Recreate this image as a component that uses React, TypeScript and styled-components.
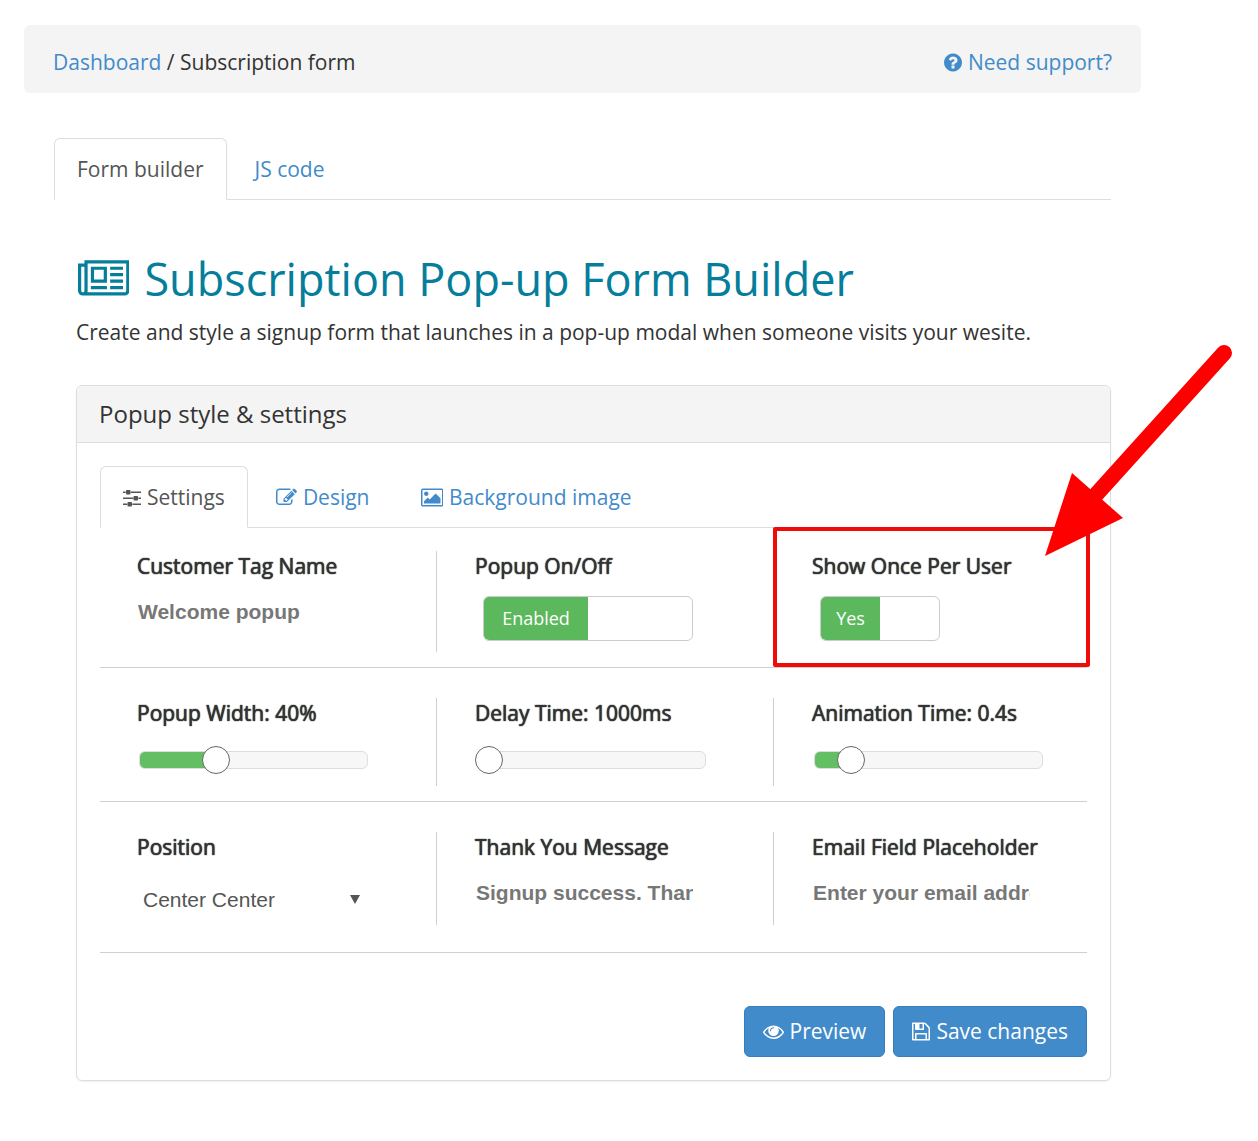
import React, { useState } from "react";
import styled, { createGlobalStyle, css } from "styled-components";

const colors = {
  link: "#428bca",
  text: "#333333",
  muted: "#555555",
  teal: "#057e9b",
  border: "#dddddd",
  rule: "#cfcfcf",
  green: "#5cb85c",
  grey: "#f4f4f4",
};

const sans = `"Open Sans", "Noto Sans", sans-serif`;
const arial = `"Liberation Sans", Arial, sans-serif`;

const GlobalStyle = createGlobalStyle`
  *, *::before, *::after { box-sizing: border-box; }
  body {
    margin: 0;
    background: #fff;
    color: ${colors.text};
    font: 21px/30px ${sans};
  }
  a { color: ${colors.link}; text-decoration: none; }
`;

/* ---------- icons ---------- */

const icons = {
  newspaper: {
    box: "0 0 2048 1792",
    d: "M1024 512h-384v384h384v-384zm128 640v128h-640v-128h640zm0-768v640h-640v-640h640zm640 768v128h-512v-128h512zm0-256v128h-512v-128h512zm0-256v128h-512v-128h512zm0-256v128h-512v-128h512zm-1536 960v-960h-128v960q0 26 19 45t45 19 45-19 19-45zm1664 0v-1088h-1536v1088q0 33-11 64h1483q26 0 45-19t19-45zm128-1216v1216q0 80-56 136t-136 56h-1664q-80 0-136-56t-56-136v-1088h256v-128h1792z",
  },
  question: {
    box: "128 0 1536 1792",
    d: "M1024 1376v-192q0-14-9-23t-23-9h-192q-14 0-23 9t-9 23v192q0 14 9 23t23 9h192q14 0 23-9t9-23zm256-672q0-88-55.5-163t-138.5-116-170-41q-243 0-371 213-15 24 8 42l132 100q7 6 19 6 16 0 25-12 53-68 86-92 34-24 86-24 48 0 85.5 26t37.5 59q0 38-20 61t-68 45q-63 28-115.5 86.5t-52.5 125.5v36q0 14 9 23t23 9h192q14 0 23-9t9-23q0-19 21.5-49.5t54.5-49.5q32-18 49-28.5t46-35 44.5-48 28-60.5 12.5-81zm384 192q0 209-103 385.5t-279.5 279.5-385.5 103-385.5-103-279.5-279.5-103-385.5 103-385.5 279.5-279.5 385.5-103 385.5 103 279.5 279.5 103 385.5z",
  },
  sliders: {
    box: "128 0 1536 1792",
    d: "M480 1408v128h-352v-128h352zm352-128q26 0 45 19t19 45v256q0 26-19 45t-45 19h-256q-26 0-45-19t-19-45v-256q0-26 19-45t45-19h256zm160-384v128h-864v-128h864zm-640-512v128h-224v-128h224zm1312 1024v128h-736v-128h736zm-960-1152q26 0 45 19t19 45v256q0 26-19 45t-45 19h-256q-26 0-45-19t-19-45v-256q0-26 19-45t45-19h256zm640 512q26 0 45 19t19 45v256q0 26-19 45t-45 19h-256q-26 0-45-19t-19-45v-256q0-26 19-45t45-19h256zm320 128v128h-224v-128h224zm0-512v128h-864v-128h864z",
  },
  pencil: {
    box: "0 0 1792 1792",
    d: "M888 1184l116-116-152-152-116 116v56h96v96h56zm440-720q-16-16-33 1l-350 350q-17 17-1 33t33-1l350-350q17-17 1-33zm80 594v190q0 119-84.5 203.5t-203.5 84.5h-832q-119 0-203.5-84.5t-84.5-203.5v-832q0-119 84.5-203.5t203.5-84.5h832q63 0 117 25 15 7 18 23 3 17-9 29l-49 49q-14 14-32 8-23-6-45-6h-832q-66 0-113 47t-47 113v832q0 66 47 113t113 47h832q66 0 113-47t47-113v-126q0-13 9-22l64-64q15-15 35-7t20 29zm-96-738l288 288-672 672h-288v-288zm444 132l-92 92-288-288 92-92q28-28 68-28t68 28l152 152q28 28 28 68t-28 68z",
  },
  picture: {
    box: "-64 0 1920 1792",
    d: "M576 576q0 80-56 136t-136 56-136-56-56-136 56-136 136-56 136 56 56 136zm1024 384v448h-1408v-192l320-320 160 160 512-512zm96-704h-1600q-13 0-22.5 9.5t-9.5 22.5v1216q0 13 9.5 22.5t22.5 9.5h1600q13 0 22.5-9.5t9.5-22.5v-1216q0-13-9.5-22.5t-22.5-9.5zm160 32v1216q0 66-47 113t-113 47h-1600q-66 0-113-47t-47-113v-1216q0-66 47-113t113-47h1600q66 0 113 47t47 113z",
  },
  eye: {
    box: "0 0 1792 1792",
    d: "M1664 960q-152-236-381-353 61 104 61 225 0 185-131.5 316.5t-316.5 131.5-316.5-131.5-131.5-316.5q0-121 61-225-229 117-381 353 133 205 333.5 326.5t434.5 121.5 434.5-121.5 333.5-326.5zm-720-384q0-20-14-34t-34-14q-125 0-214.5 89.5t-89.5 214.5q0 20 14 34t34 14 34-14 14-34q0-86 61-147t147-61q20 0 34-14t14-34zm848 384q0 34-20 69-140 230-376.5 368.5t-499.5 138.5-499.5-139-376.5-368q-20-35-20-69t20-69q140-229 376.5-368t499.5-139 499.5 139 376.5 368q20 35 20 69z",
  },
  floppy: {
    box: "128 0 1536 1792",
    d: "M512 1536h768v-384h-768v384zm896 0h128v-896q0-14-10-38.5t-20-34.5l-281-281q-10-10-34-20t-39-10v416q0 40-28 68t-68 28h-576q-40 0-68-28t-28-68v-416h-128v1280h128v-416q0-40 28-68t68-28h832q40 0 68 28t28 68v416zm-384-928v-320q0-13-9.5-22.5t-22.5-9.5h-192q-13 0-22.5 9.5t-9.5 22.5v320q0 13 9.5 22.5t22.5 9.5h192q13 0 22.5-9.5t9.5-22.5zm640 32v928q0 40-28 68t-68 28h-1344q-40 0-68-28t-28-68v-1344q0-40 28-68t68-28h928q40 0 88 20t76 48l280 280q28 28 48 76t20 88z",
  },
};

const IconSvg = styled.svg<{ $size: number }>`
  display: block;
  flex: none;
  height: ${(p) => p.$size}px;
  width: auto;
  fill: currentColor;
`;

function Icon({ name, size = 21 }: { name: keyof typeof icons; size?: number }) {
  return (
    <IconSvg $size={size} viewBox={icons[name].box} aria-hidden="true">
      <path d={icons[name].d} />
    </IconSvg>
  );
}

/* ---------- page ---------- */

const Page = styled.div`
  padding: 25px 117px 60px 24px;
`;

const TopBar = styled.header`
  display: flex;
  justify-content: space-between;
  align-items: center;
  padding: 22px 29px 16px;
  border-radius: 6px;
  background: ${colors.grey};
`;

const SupportLink = styled.a`
  display: flex;
  align-items: center;
  gap: 6px;
`;

const Main = styled.main`
  padding: 45px 30px 0;
`;

const TabList = styled.nav`
  display: flex;
  gap: 5px;
  border-bottom: 1px solid ${colors.border};
`;

const Tab = styled.a<{ $active?: boolean }>`
  display: flex;
  align-items: center;
  gap: 6px;
  margin-bottom: -1px;
  padding: 15px 22px;
  border: 1px solid transparent;
  border-radius: 6px 6px 0 0;
  ${(p) =>
    p.$active &&
    css`
      color: ${colors.muted};
      background: #fff;
      border-color: ${colors.border} ${colors.border} #fff;
    `}
`;

const Content = styled.div`
  padding: 47px 0 0 22px;
`;

const Title = styled.h1`
  display: flex;
  align-items: center;
  gap: 15px;
  margin: 0;
  padding-left: 2px;
  color: ${colors.teal};
  font-size: 45px;
  line-height: 64px;
  font-weight: 400;
`;

const Lead = styled.p`
  margin: 6px 0 38px;
`;

const Panel = styled.section`
  border: 1px solid ${colors.border};
  border-radius: 6px;
  box-shadow: 0 1px 2px rgba(0, 0, 0, 0.06);
`;

const PanelTitle = styled.h2`
  margin: 0;
  padding: 13px 22px;
  border-bottom: 1px solid ${colors.border};
  border-radius: 5px 5px 0 0;
  background: ${colors.grey};
  font-size: 24px;
  line-height: 30px;
  font-weight: 400;
`;

const PanelBody = styled.form`
  padding: 23px;
`;

const Row = styled.div<{ $top: number; $bottom: number }>`
  display: grid;
  grid-template-columns: 14fr 14fr 13fr;
  padding: ${(p) => p.$top}px 0 ${(p) => p.$bottom}px;
  border-bottom: 1px solid ${colors.rule};
`;

const Cell = styled.div<{ $height: number }>`
  position: relative;
  min-width: 0;
  min-height: ${(p) => p.$height}px;
  padding-left: 38px;
  &:first-child {
    padding-left: 37px;
  }
  &:not(:last-child) {
    border-right: 1px solid ${colors.rule};
  }
`;

const Label = styled.label`
  display: block;
  text-shadow: 0 0 1px ${colors.text}, 0 0 1px ${colors.text};
  white-space: nowrap;
`;

const TextInput = styled.input`
  display: block;
  width: 218px;
  height: 30px;
  margin-top: 16px;
  padding: 0 0 0 1px;
  border: 0;
  outline: 0;
  background: none;
  color: #777;
  font: bold 21px/30px ${arial};
`;

const SelectWrap = styled.div`
  position: relative;
  width: 227px;
  margin-top: 18px;
  &::after {
    content: "";
    position: absolute;
    right: 4px;
    top: 15px;
    border: 5px solid transparent;
    border-top: 9px solid ${colors.muted};
    border-bottom: 0;
    pointer-events: none;
  }
`;

const Select = styled.select`
  appearance: none;
  display: block;
  width: 100%;
  height: 40px;
  padding: 0 6px;
  border: 0;
  background: none;
  color: ${colors.muted};
  font: 21px/30px ${arial};
`;

const HiddenCheck = styled.input`
  position: absolute;
  opacity: 0;
  width: 1px;
  height: 1px;
`;

const Toggle = styled.label<{ $width: number }>`
  display: grid;
  grid-template-columns: 1fr 1fr;
  width: ${(p) => p.$width}px;
  height: 45px;
  margin: 15px 0 0 8px;
  overflow: hidden;
  border: 1px solid #ccc;
  border-radius: 6px;
  background: #fff;
  cursor: pointer;
`;

const ToggleFace = styled.span<{ $on: boolean }>`
  grid-column: ${(p) => (p.$on ? 1 : 2)};
  background: ${(p) => (p.$on ? colors.green : "#eeeeee")};
  color: ${(p) => (p.$on ? "#fff" : colors.text)};
  font-size: 18px;
  line-height: 43px;
  text-align: center;
`;

const Range = styled.input`
  appearance: none;
  display: block;
  width: 229px;
  height: 18px;
  margin: 23px 0 0 2px;
  border: 1px solid ${colors.border};
  border-radius: 6px;
  outline: 0;
  background: linear-gradient(#64be64, #64be64) no-repeat #f7f7f7;
  &::-webkit-slider-runnable-track {
    height: 28px;
    margin: 0 -3px;
  }
  &::-webkit-slider-thumb {
    appearance: none;
    width: 28px;
    height: 28px;
    border: 1px solid #666;
    border-radius: 50%;
    background: #fff;
  }
`;

const Highlight = styled.div`
  position: absolute;
  inset: -24px -3px -15px -1px;
  border: 4px solid #f00a0a;
  border-radius: 2px;
  pointer-events: none;
`;

const Arrow = styled.svg`
  position: absolute;
  right: -146px;
  top: -207px;
  width: 188px;
  height: 213px;
  pointer-events: none;
`;

const Actions = styled.div`
  display: flex;
  justify-content: flex-end;
  gap: 8px;
  padding-top: 53px;
`;

const Button = styled.button`
  display: flex;
  align-items: center;
  gap: 6px;
  padding: 10px 18px;
  border: 1px solid #357ebd;
  border-radius: 6px;
  background: ${colors.link};
  color: #fff;
  font: 21px/29px ${sans};
  cursor: pointer;
`;

/* ---------- fields ---------- */

function ToggleField(props: { id: string; label: string; on: string; off: string; width: number }) {
  const [checked, setChecked] = useState(true);
  return (
    <>
      <Label htmlFor={props.id}>{props.label}</Label>
      <Toggle $width={props.width}>
        <HiddenCheck
          id={props.id}
          type="checkbox"
          checked={checked}
          onChange={(e) => setChecked(e.target.checked)}
        />
        <ToggleFace $on={checked}>{checked ? props.on : props.off}</ToggleFace>
      </Toggle>
    </>
  );
}

function RangeField(props: {
  id: string;
  label: string;
  unit: string;
  min: number;
  max: number;
  step: number;
  initial: number;
}) {
  const [value, setValue] = useState(props.initial);
  const filled = ((value - props.min) / (props.max - props.min)) * 88 + 6;
  return (
    <>
      <Label htmlFor={props.id}>
        {props.label}: {value}
        {props.unit}
      </Label>
      <Range
        id={props.id}
        type="range"
        min={props.min}
        max={props.max}
        step={props.step}
        value={value}
        onChange={(e) => setValue(Number(e.target.value))}
        style={{ backgroundSize: `${filled}% 100%` }}
      />
    </>
  );
}

export default function App() {
  return (
    <>
      <GlobalStyle />
      <Page>
        <TopBar>
          <div>
            <a href="#dashboard">Dashboard</a> / Subscription form
          </div>
          <SupportLink href="#support">
            <Icon name="question" />
            Need support?
          </SupportLink>
        </TopBar>
        <Main>
          <TabList>
            <Tab href="#builder" $active>
              Form builder
            </Tab>
            <Tab href="#code">JS code</Tab>
          </TabList>
          <Content>
            <Title>
              <Icon name="newspaper" size={45} />
              Subscription Pop-up Form Builder
            </Title>
            <Lead>
              Create and style a signup form that launches in a pop-up modal when someone visits your wesite.
            </Lead>
            <Panel>
              <PanelTitle>Popup style &amp; settings</PanelTitle>
              <PanelBody onSubmit={(e) => e.preventDefault()}>
                <TabList>
                  <Tab href="#settings" $active>
                    <Icon name="sliders" />
                    Settings
                  </Tab>
                  <Tab href="#design">
                    <Icon name="pencil" />
                    Design
                  </Tab>
                  <Tab href="#background">
                    <Icon name="picture" />
                    Background image
                  </Tab>
                </TabList>
                <Row $top={23} $bottom={15}>
                  <Cell $height={101}>
                    <Label htmlFor="tag">Customer Tag Name</Label>
                    <TextInput id="tag" defaultValue="Welcome popup" />
                  </Cell>
                  <Cell $height={101}>
                    <ToggleField id="enabled" label="Popup On/Off" on="Enabled" off="Disabled" width={210} />
                  </Cell>
                  <Cell $height={101}>
                    <ToggleField id="once" label="Show Once Per User" on="Yes" off="No" width={120} />
                    <Highlight />
                    <Arrow viewBox="0 0 188 213" aria-hidden="true">
                      <path d="M179 9L48 154" stroke="#f00" strokeWidth="16" strokeLinecap="round" />
                      <path d="M0 212L27 129L78 174Z" fill="#f00" />
                    </Arrow>
                  </Cell>
                </Row>
                <Row $top={30} $bottom={15}>
                  <Cell $height={88}>
                    <RangeField id="width" label="Popup Width" unit="%" min={12} max={100} step={1} initial={40} />
                  </Cell>
                  <Cell $height={88}>
                    <RangeField id="delay" label="Delay Time" unit="ms" min={1000} max={9000} step={100} initial={1000} />
                  </Cell>
                  <Cell $height={88}>
                    <RangeField id="animation" label="Animation Time" unit="s" min={0.1} max={2.6} step={0.1} initial={0.4} />
                  </Cell>
                </Row>
                <Row $top={30} $bottom={27}>
                  <Cell $height={93}>
                    <Label htmlFor="position">Position</Label>
                    <SelectWrap>
                      <Select id="position" defaultValue="cc">
                        <option value="cc">Center Center</option>
                        <option value="tl">Top Left</option>
                        <option value="br">Bottom Right</option>
                      </Select>
                    </SelectWrap>
                  </Cell>
                  <Cell $height={93}>
                    <Label htmlFor="thanks">Thank You Message</Label>
                    <TextInput id="thanks" defaultValue="Signup success. Thank you!" />
                  </Cell>
                  <Cell $height={93}>
                    <Label htmlFor="placeholder">Email Field Placeholder</Label>
                    <TextInput id="placeholder" defaultValue="Enter your email address" />
                  </Cell>
                </Row>
                <Actions>
                  <Button type="button">
                    <Icon name="eye" />
                    Preview
                  </Button>
                  <Button type="submit">
                    <Icon name="floppy" />
                    Save changes
                  </Button>
                </Actions>
              </PanelBody>
            </Panel>
          </Content>
        </Main>
      </Page>
    </>
  );
}
